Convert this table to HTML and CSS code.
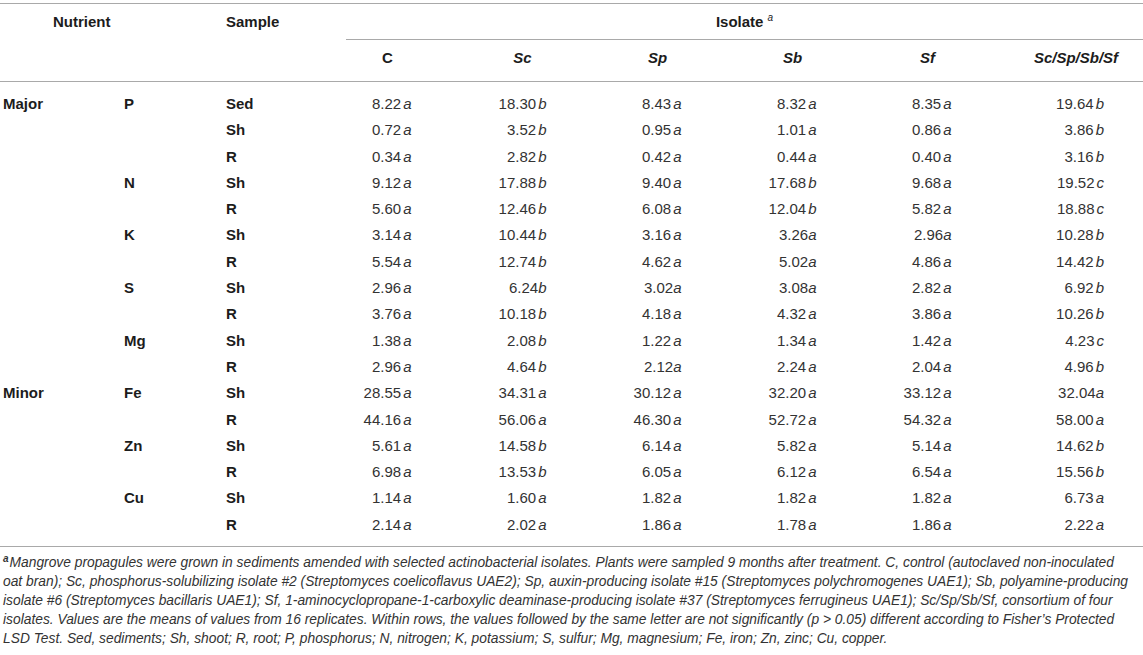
FILE: index.html
```html
<!DOCTYPE html>
<html>
<head>
<meta charset="utf-8">
<link rel="stylesheet" href="styles.css">
</head>
<body>
<div class="wrap">
<table class="tbl">
  <colgroup>
    <col class="c1"><col class="c2"><col class="c3">
    <col class="ci"><col class="ci"><col class="ci"><col class="ci"><col class="ci"><col class="cl">
  </colgroup>
  <thead>
    <tr class="h1">
      <th colspan="2" class="nut">Nutrient</th>
      <th class="samp">Sample</th>
      <th colspan="6" class="iso"><div class="isoline">Isolate <sup>a</sup></div></th>
    </tr>
    <tr class="h2">
      <th colspan="3"></th>
      <th class="ih">C</th>
      <th class="ih"><i>Sc</i></th>
      <th class="ih"><i>Sp</i></th>
      <th class="ih"><i>Sb</i></th>
      <th class="ih"><i>Sf</i></th>
      <th class="ih last"><i>Sc/Sp/Sb/Sf</i></th>
    </tr>
  </thead>
  <tbody>
    <tr><td class="lab">Major</td><td class="lab">P</td><td class="lab">Sed</td>
      <td><span class="v">8.22<i>a</i></span></td><td><span class="v">18.30<i>b</i></span></td><td><span class="v">8.43<i>a</i></span></td><td><span class="v">8.32<i>a</i></span></td><td><span class="v">8.35<i>a</i></span></td><td class="last"><span class="v">19.64<i>b</i></span></td></tr>
    <tr><td></td><td></td><td class="lab">Sh</td>
      <td><span class="v">0.72<i>a</i></span></td><td><span class="v">3.52<i>b</i></span></td><td><span class="v">0.95<i>a</i></span></td><td><span class="v">1.01<i>a</i></span></td><td><span class="v">0.86<i>a</i></span></td><td class="last"><span class="v">3.86<i>b</i></span></td></tr>
    <tr><td></td><td></td><td class="lab">R</td>
      <td><span class="v">0.34<i>a</i></span></td><td><span class="v">2.82<i>b</i></span></td><td><span class="v">0.42<i>a</i></span></td><td><span class="v">0.44<i>a</i></span></td><td><span class="v">0.40<i>a</i></span></td><td class="last"><span class="v">3.16<i>b</i></span></td></tr>
    <tr><td></td><td class="lab">N</td><td class="lab">Sh</td>
      <td><span class="v">9.12<i>a</i></span></td><td><span class="v">17.88<i>b</i></span></td><td><span class="v">9.40<i>a</i></span></td><td><span class="v">17.68<i>b</i></span></td><td><span class="v">9.68<i>a</i></span></td><td class="last"><span class="v">19.52<i>c</i></span></td></tr>
    <tr><td></td><td></td><td class="lab">R</td>
      <td><span class="v">5.60<i>a</i></span></td><td><span class="v">12.46<i>b</i></span></td><td><span class="v">6.08<i>a</i></span></td><td><span class="v">12.04<i>b</i></span></td><td><span class="v">5.82<i>a</i></span></td><td class="last"><span class="v">18.88<i>c</i></span></td></tr>
    <tr><td></td><td class="lab">K</td><td class="lab">Sh</td>
      <td><span class="v">3.14<i>a</i></span></td><td><span class="v">10.44<i>b</i></span></td><td><span class="v">3.16<i>a</i></span></td><td><span class="v">3.26<i class="n">a</i></span></td><td><span class="v">2.96<i class="n">a</i></span></td><td class="last"><span class="v">10.28<i>b</i></span></td></tr>
    <tr><td></td><td></td><td class="lab">R</td>
      <td><span class="v">5.54<i>a</i></span></td><td><span class="v">12.74<i>b</i></span></td><td><span class="v">4.62<i>a</i></span></td><td><span class="v">5.02<i class="n">a</i></span></td><td><span class="v">4.86<i>a</i></span></td><td class="last"><span class="v">14.42<i>b</i></span></td></tr>
    <tr><td></td><td class="lab">S</td><td class="lab">Sh</td>
      <td><span class="v">2.96<i>a</i></span></td><td><span class="v">6.24<i class="n">b</i></span></td><td><span class="v">3.02<i class="n">a</i></span></td><td><span class="v">3.08<i class="n">a</i></span></td><td><span class="v">2.82<i>a</i></span></td><td class="last"><span class="v">6.92<i>b</i></span></td></tr>
    <tr><td></td><td></td><td class="lab">R</td>
      <td><span class="v">3.76<i>a</i></span></td><td><span class="v">10.18<i>b</i></span></td><td><span class="v">4.18<i>a</i></span></td><td><span class="v">4.32<i>a</i></span></td><td><span class="v">3.86<i>a</i></span></td><td class="last"><span class="v">10.26<i>b</i></span></td></tr>
    <tr><td></td><td class="lab">Mg</td><td class="lab">Sh</td>
      <td><span class="v">1.38<i>a</i></span></td><td><span class="v">2.08<i>b</i></span></td><td><span class="v">1.22<i>a</i></span></td><td><span class="v">1.34<i>a</i></span></td><td><span class="v">1.42<i>a</i></span></td><td class="last"><span class="v">4.23<i>c</i></span></td></tr>
    <tr><td></td><td></td><td class="lab">R</td>
      <td><span class="v">2.96<i>a</i></span></td><td><span class="v">4.64<i>b</i></span></td><td><span class="v">2.12<i class="n">a</i></span></td><td><span class="v">2.24<i>a</i></span></td><td><span class="v">2.04<i>a</i></span></td><td class="last"><span class="v">4.96<i>b</i></span></td></tr>
    <tr><td class="lab">Minor</td><td class="lab">Fe</td><td class="lab">Sh</td>
      <td><span class="v">28.55<i>a</i></span></td><td><span class="v">34.31<i>a</i></span></td><td><span class="v">30.12<i>a</i></span></td><td><span class="v">32.20<i>a</i></span></td><td><span class="v">33.12<i>a</i></span></td><td class="last"><span class="v">32.04<i class="n">a</i></span></td></tr>
    <tr><td></td><td></td><td class="lab">R</td>
      <td><span class="v">44.16<i>a</i></span></td><td><span class="v">56.06<i>a</i></span></td><td><span class="v">46.30<i>a</i></span></td><td><span class="v">52.72<i>a</i></span></td><td><span class="v">54.32<i>a</i></span></td><td class="last"><span class="v">58.00<i>a</i></span></td></tr>
    <tr><td></td><td class="lab">Zn</td><td class="lab">Sh</td>
      <td><span class="v">5.61<i>a</i></span></td><td><span class="v">14.58<i>b</i></span></td><td><span class="v">6.14<i>a</i></span></td><td><span class="v">5.82<i>a</i></span></td><td><span class="v">5.14<i>a</i></span></td><td class="last"><span class="v">14.62<i>b</i></span></td></tr>
    <tr><td></td><td></td><td class="lab">R</td>
      <td><span class="v">6.98<i>a</i></span></td><td><span class="v">13.53<i>b</i></span></td><td><span class="v">6.05<i>a</i></span></td><td><span class="v">6.12<i>a</i></span></td><td><span class="v">6.54<i>a</i></span></td><td class="last"><span class="v">15.56<i>b</i></span></td></tr>
    <tr><td></td><td class="lab">Cu</td><td class="lab">Sh</td>
      <td><span class="v">1.14<i>a</i></span></td><td><span class="v">1.60<i>a</i></span></td><td><span class="v">1.82<i>a</i></span></td><td><span class="v">1.82<i>a</i></span></td><td><span class="v">1.82<i>a</i></span></td><td class="last"><span class="v">6.73<i>a</i></span></td></tr>
    <tr><td></td><td></td><td class="lab">R</td>
      <td><span class="v">2.14<i>a</i></span></td><td><span class="v">2.02<i>a</i></span></td><td><span class="v">1.86<i>a</i></span></td><td><span class="v">1.78<i>a</i></span></td><td><span class="v">1.86<i>a</i></span></td><td class="last"><span class="v">2.22<i>a</i></span></td></tr>
  </tbody>
</table>
<p class="note"><sup>a</sup>Mangrove propagules were grown in sediments amended with selected actinobacterial isolates. Plants were sampled 9 months after treatment. C, control (autoclaved non-inoculated<br>oat bran); Sc, phosphorus-solubilizing isolate #2 (Streptomyces coelicoflavus UAE2); Sp, auxin-producing isolate #15 (Streptomyces polychromogenes UAE1); Sb, polyamine-producing<br>isolate #6 (Streptomyces bacillaris UAE1); Sf, 1-aminocyclopropane-1-carboxylic deaminase-producing isolate #37 (Streptomyces ferrugineus UAE1); Sc/Sp/Sb/Sf, consortium of four<br>isolates. Values are the means of values from 16 replicates. Within rows, the values followed by the same letter are not significantly (p &gt; 0.05) different according to Fisher’s Protected<br>LSD Test. Sed, sediments; Sh, shoot; R, root; P, phosphorus; N, nitrogen; K, potassium; S, sulfur; Mg, magnesium; Fe, iron; Zn, zinc; Cu, copper.</p>
</div>
</body>
</html>
```

FILE: styles.css
```css
html, body {
  margin: 0;
  padding: 0;
  background: #ffffff;
}
body {
  font-family: "Liberation Sans", Arial, Helvetica, sans-serif;
  color: #2b2b2b;
}
.wrap {
  width: 1143px;
  padding-top: 3px;
}
.tbl {
  width: 1143px;
  table-layout: fixed;
  border-collapse: collapse;
  font-size: 15px;
  line-height: 18.3px;
}
.c1 { width: 120px; }
.c2 { width: 102px; }
.c3 { width: 98px; }
.ci { width: 135px; }
.cl { width: 148px; }

.tbl thead tr.h1 { border-top: 1px solid #a9a9a9; }
.tbl thead tr.h2 { border-bottom: 1px solid #a9a9a9; }
.tbl th {
  font-weight: bold;
  color: #1c1c1c;
  text-align: left;
  padding: 0;
  vertical-align: top;
}
.h1 th { padding-top: 9px; padding-bottom: 8.7px; }
.h1 th.nut { padding-left: 53px; }
.h1 th.samp { padding-left: 4px; }
.h1 th.iso { padding-bottom: 0; }
.isoline {
  margin-left: 26px;
  text-align: center;
  padding-bottom: 7.7px;
  border-bottom: 1px solid #a9a9a9;
}
.isoline sup {
  font-size: 10px;
  font-style: italic;
  font-weight: normal;
  line-height: 0;
  vertical-align: 6px;
}
.h2 th { padding-top: 8.85px; padding-bottom: 13.85px; }
.h2 th.ih { text-align: center; }
.h2 th.last { padding-left: 14px; }

.tbl td {
  padding: 4px 0;
  text-align: center;
  color: #333333;
}
.tbl tbody tr:first-child td { padding-top: 13px; }
.tbl tbody tr:last-child td { padding-bottom: 12px; }
.tbl tbody tr:last-child { border-bottom: 1px solid #a9a9a9; }
.tbl td.lab {
  text-align: left;
  font-weight: bold;
  color: #1c1c1c;
  padding-left: 4px;
}
.tbl tbody td.lab:first-child { padding-left: 3px; }
.tbl td.last { padding-left: 22px; }
.v {
  display: inline-block;
  width: 48px;
  text-align: right;
  white-space: nowrap;
}
.v i {
  margin-left: 2px;
}
.v i.n { margin-left: 0; }

.note {
  margin: 6px 0 0 0;
  padding-left: 3px;
  font-size: 13.8px;
  line-height: 19px;
  font-style: italic;
  color: #333333;
  white-space: nowrap;
}
.note sup {
  font-size: 10px;
  font-weight: bold;
  line-height: 0;
  vertical-align: 5px;
  margin-right: 1px;
}
```
